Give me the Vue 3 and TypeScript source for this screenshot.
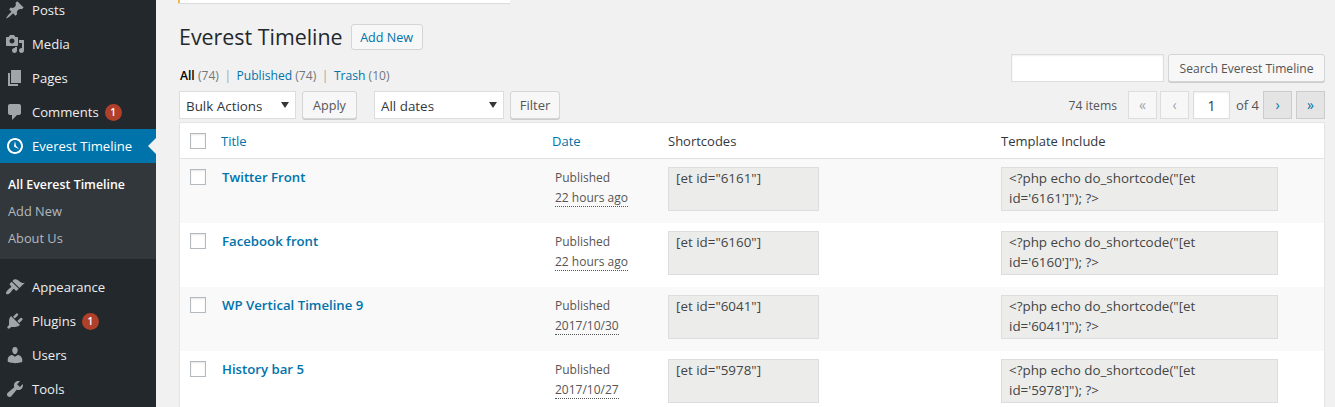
<script setup lang="ts">
interface MenuItem { label: string; d: string; badge?: string }
const icons = {
  post: 'M10.44 3.02l1.82-1.82 6.36 6.35-1.83 1.82c-1.05-.68-2.48-.57-3.41.36l-.75.75c-.92.93-1.04 2.35-.35 3.41l-1.83 1.82-2.41-2.41-2.8 2.79c-.42.42-3.38 2.71-3.8 2.29s1.86-3.39 2.28-3.81l2.79-2.79L4.1 9.36l1.83-1.82c1.05.69 2.48.57 3.4-.36l.75-.75c.93-.92 1.05-2.35.36-3.41z',
  media: 'M13 11V4c0-.55-.45-1-1-1h-1.67L9 1H5L3.67 3H2c-.55 0-1 .45-1 1v7c0 .55.45 1 1 1h10c.55 0 1-.45 1-1zM7 4.5c1.38 0 2.5 1.12 2.5 2.5S8.38 9.5 7 9.5 4.5 8.38 4.5 7 5.62 4.5 7 4.5zM14 6h5v10.5c0 1.38-1.12 2.5-2.5 2.5S14 17.88 14 16.5s1.12-2.5 2.5-2.5c.17 0 .34.02.5.05V9h-3V6zm-4 8.05V13h2v3.5c0 1.38-1.12 2.5-2.5 2.5S7 17.88 7 16.5 8.12 14 9.5 14c.17 0 .34.02.5.05z',
  page: 'M6 15V2h10v13H6zm-1 1h8v2H3V5h2v11z',
  comments: 'M5 2h9c1.1 0 2 .9 2 2v7c0 1.1-.9 2-2 2h-2l-5 5v-5H5c-1.1 0-2-.9-2-2V4c0-1.1.9-2 2-2z',
  clock: 'M10 2c4.42 0 8 3.58 8 8s-3.58 8-8 8-8-3.58-8-8 3.58-8 8-8zm0 14c3.31 0 6-2.69 6-6s-2.69-6-6-6-6 2.69-6 6 2.69 6 6 6zm-.71-5.29c.07.05.14.1.23.15l-.02.02L14 13l-3.03-3.19L10 5l-.97 4.81h.01c0 .02-.01.05-.02.09S9 9.97 9 10c0 .28.1.52.29.71z',
  appearance: 'M14.48 11.06L7.41 3.99l1.5-1.5c.5-.56 2.3-.47 3.51.32 1.21.8 1.43 1.28 2.91 2.1 1.18.64 2.45 1.26 4.45.85zm-.71.71L6.7 4.7 4.93 6.47c-.39.39-.39 1.02 0 1.41l1.06 1.06c.39.39.39 1.03 0 1.42-.6.6-1.43 1.11-2.21 1.69-.35.26-.7.53-1.01.84-1.34 1.34-2.37 3.06-1.37 4.06s2.72 0 4.07-1.36c.31-.31.58-.66.85-1.02.57-.78 1.08-1.61 1.69-2.21.39-.39 1.02-.39 1.41 0l1.06 1.06c.39.39 1.02.39 1.41 0z',
  plugins: 'M13.11 4.36L9.87 7.6 8 5.73l3.24-3.24c.35-.34 1.05-.2 1.56.32.52.51.66 1.21.31 1.55zm-8 1.77l.91-1.12 9.01 9.01-1.19.84c-.71.71-2.63 1.16-3.82 1.16H6.14L4.9 17.26c-.59.59-1.54.59-2.12 0-.59-.58-.59-1.53 0-2.12l1.24-1.24v-3.88c0-1.13.4-3.19 1.09-3.89zm7.26 3.97l3.24-3.24c.34-.35 1.04-.21 1.55.31.52.51.66 1.21.31 1.55l-3.24 3.25z',
  users: 'M10 9.25c-2.27 0-2.73-3.44-2.73-3.44C7 4.02 7.82 2 9.97 2c2.16 0 2.98 2.02 2.71 3.81 0 0-.41 3.44-2.68 3.44zm0 2.57L12.72 10c2.39 0 4.52 2.33 4.52 4.53v2.49s-3.65 1.13-7.24 1.13c-3.65 0-7.24-1.13-7.24-1.13v-2.49c0-2.25 1.94-4.48 4.47-4.48z',
  tools: 'M16.68 9.77c-1.34 1.34-3.3 1.67-4.95.99l-5.41 6.52c-.99.99-2.59.99-3.58 0s-.99-2.59 0-3.57l6.52-5.42c-.68-1.65-.35-3.61.99-4.95 1.28-1.28 3.12-1.62 4.72-1.06l-2.89 2.89 2.82 2.82 2.86-2.87c.53 1.58.18 3.39-1.08 4.67z',
}
const topItems: MenuItem[] = [
  { label: 'Posts', d: icons.post },
  { label: 'Media', d: icons.media },
  { label: 'Pages', d: icons.page },
  { label: 'Comments', d: icons.comments, badge: '1' },
]
const bottomItems: MenuItem[] = [
  { label: 'Appearance', d: icons.appearance },
  { label: 'Plugins', d: icons.plugins, badge: '1' },
  { label: 'Users', d: icons.users },
  { label: 'Tools', d: icons.tools },
]
const rows = [
  { title: 'Twitter Front', date: '22 hours ago', id: '6161' },
  { title: 'Facebook front', date: '22 hours ago', id: '6160' },
  { title: 'WP Vertical Timeline 9', date: '2017/10/30', id: '6041' },
  { title: 'History bar 5', date: '2017/10/27', id: '5978' },
]
</script>

<template>
  <div class="page">
    <aside class="sidebar">
      <ul class="menu first">
        <li v-for="m in topItems" :key="m.label" class="item">
          <svg class="ico" viewBox="0 0 20 20"><path :d="m.d" /></svg>
          <span>{{ m.label }}</span>
          <b v-if="m.badge" class="badge">{{ m.badge }}</b>
        </li>
      </ul>
      <div class="item active">
        <svg class="ico" viewBox="0 0 20 20"><path :d="icons.clock" /></svg>
        <span>Everest Timeline</span>
      </div>
      <ul class="sub">
        <li class="current">All Everest Timeline</li>
        <li>Add New</li>
        <li>About Us</li>
      </ul>
      <ul class="menu second">
        <li v-for="m in bottomItems" :key="m.label" class="item">
          <svg class="ico" viewBox="0 0 20 20"><path :d="m.d" /></svg>
          <span>{{ m.label }}</span>
          <b v-if="m.badge" class="badge">{{ m.badge }}</b>
        </li>
      </ul>
    </aside>

    <main class="main">
      <div class="notice"></div>
      <div class="head">
        <h1>Everest Timeline</h1>
        <a class="btn add">Add New</a>
      </div>
      <div class="views-row">
        <ul class="views">
          <li><strong>All</strong> <em>(74)</em></li>
          <li class="sep">|</li>
          <li><a>Published</a> <em>(74)</em></li>
          <li class="sep">|</li>
          <li><a>Trash</a> <em>(10)</em></li>
        </ul>
        <div class="search">
          <input class="field search-input" type="text" />
          <button class="btn search-btn">Search Everest Timeline</button>
        </div>
      </div>
      <div class="nav">
        <div class="select bulk">Bulk Actions<i></i></div>
        <button class="btn apply">Apply</button>
        <div class="select dates">All dates<i></i></div>
        <button class="btn filter">Filter</button>
        <div class="pager">
          <span class="count">74 items</span>
          <span class="pg off first-pg">«</span>
          <span class="pg off">‹</span>
          <span class="field num">1</span>
          <span class="of">of 4</span>
          <span class="pg on">›</span>
          <span class="pg on">»</span>
        </div>
      </div>
      <table class="tbl">
        <colgroup>
          <col class="c1" /><col class="c2" /><col class="c3" /><col class="c4" /><col />
        </colgroup>
        <thead>
          <tr>
            <th class="cb"><span class="check"></span></th>
            <th class="link title-head">Title</th>
            <th class="link date-head">Date</th>
            <th>Shortcodes</th>
            <th>Template Include</th>
          </tr>
        </thead>
        <tbody>
          <tr v-for="r in rows" :key="r.id">
            <td class="cb"><span class="check"></span></td>
            <td><a class="row-title">{{ r.title }}</a></td>
            <td class="date">Published<br /><abbr>{{ r.date }}</abbr></td>
            <td><div class="code short">[et id="{{ r.id }}"]</div></td>
            <td><div class="code tmpl">&lt;?php echo do_shortcode("[et id='{{ r.id }}']"); ?&gt;</div></td>
          </tr>
        </tbody>
      </table>
    </main>
  </div>
</template>

<style>
html, body { margin: 0; overflow: hidden; }
</style>

<style scoped>
.page {
  display: flex;
  width: 1335px;
  height: 407px;
  overflow: hidden;
  background: #f1f1f1;
  font-family: "Open Sans", sans-serif;
  font-size: 13px;
  color: #444;
}
ul { list-style: none; margin: 0; padding: 0; }
.sidebar { width: 156px; flex: none; background: #23282d; color: #eee; font-size: 13.1px; }
.menu.first { margin-top: -7px; }
.menu.second { margin-top: 11px; }
.item { height: 34px; display: flex; align-items: center; position: relative; }
.ico { width: 20px; height: 20px; margin: 0 7px 0 5px; fill: #a0a5aa; flex: none; }
.badge {
  width: 17px; height: 17px; border-radius: 50%;
  background: #b0402a; color: #fff; font-size: 10px; font-weight: 600;
  display: flex; align-items: center; justify-content: center;
  margin-left: 6px;
}
.active { background: #0073aa; color: #fff; }
.active .ico { fill: #fff; }
.active::after {
  content: ""; position: absolute; right: 0; top: 50%;
  margin-top: -8px;
  border: 8px solid transparent; border-right-color: #f1f1f1; border-left-width: 0;
}
.sub { background: #32373c; height: 96px; padding-top: 8px; box-sizing: border-box; font-size: 12.8px; color: #b4b9be; }
.sub li { height: 27px; line-height: 27px; padding-left: 8px; }
.sub .current { color: #fff; font-weight: 600; font-size: 12.4px; }

.main { flex: 1; min-width: 0; padding-right: 10px; position: relative; box-sizing: border-box; }
.notice {
  margin-left: 22px; width: 332px; height: 3px; box-sizing: border-box;
  background: #fff; border-left: 2px solid #f0b849; box-shadow: 0 1px 1px rgba(0,0,0,.1);
}
.head { display: flex; align-items: center; margin: 21px 0 0 23px; height: 26px; }
h1 { margin: 0; font-size: 21.4px; font-weight: 400; color: #23282d; line-height: 26px; }
.btn {
  display: inline-flex; align-items: center; justify-content: center;
  box-sizing: border-box; height: 28px; border: 1px solid #d3d6d6; border-radius: 3px;
  background: #f7f7f7; color: #555; font: 13px "Open Sans", sans-serif; padding: 0;
  box-shadow: 0 1px 0 #ccc;
}
.add { margin-left: 8px; width: 72px; height: 26px; color: #0073aa; box-shadow: none; font-size: 12.6px; }
.views-row { display: flex; justify-content: space-between; height: 37px; margin: 4px 0 0 24px; }
.views { display: flex; align-items: center; height: 20px; margin-top: 11px; gap: 5.5px; font-size: 12.1px; }
.views em { font-style: normal; color: #72777c; }
.views strong { font-weight: 600; color: #000; }
.views a { color: #0073aa; }
.views .sep { color: #a0a5aa; }
.search { display: flex; gap: 4px; height: 28px; }
.field { box-sizing: border-box; border: 1px solid #ddd; background: #fff; box-shadow: inset 0 1px 2px rgba(0,0,0,.07); padding: 0; margin: 0; }
.search-input { width: 153px; height: 28px; }
.search-btn { width: 157px; font-size: 12.1px; }
.nav { display: flex; align-items: center; height: 28px; margin: 0 0 3px 23px; }
.select {
  box-sizing: border-box; height: 28px; background: #fff; border: 1px solid #ddd;
  color: #32373c; line-height: 28px; padding-left: 6px; position: relative; font-size: 13.4px;
}
.select i {
  position: absolute; right: 6px; top: 10px;
  border: 4px solid transparent; border-top: 6px solid #32373c; border-bottom: 0;
}
.bulk { width: 117px; }
.apply { width: 55px; margin-left: 6px; font-size: 12.6px; }
.dates { width: 130px; margin-left: 17px; }
.filter { width: 50px; margin-left: 6px; }
.pager { margin-left: auto; display: flex; align-items: center; color: #555; font-size: 12.2px; }
.count { margin-right: 11px; }
.pg {
  box-sizing: border-box; width: 29px; height: 28px; display: flex; align-items: center; justify-content: center;
  border: 1px solid #ddd; font-size: 14px; line-height: 1;
}
.pg.off { background: #f7f7f7; color: #a0a5aa; margin-right: 3px; }
.pg.on { background: #e4e4e4; color: #0073aa; border-color: #ccc; margin-left: 4px; }
.num { width: 37px; height: 28px; margin: 0 0 0 1px; display: flex; align-items: center; justify-content: center; font-size: 14px; color: #32373c; }
.of { margin: 0 0 0 6px; font-size: 13px; }

.tbl {
  width: 1146px; margin-left: 23px; border-collapse: separate; border-spacing: 0;
  table-layout: fixed; background: #fff; border: 1px solid #e5e5e5; box-sizing: border-box;
}
.c1 { width: 32px; } .c2 { width: 331px; } .c3 { width: 115px; } .c4 { width: 333px; }
th {
  height: 36px; padding: 0 0 0 10px; text-align: left; font-weight: 400; font-size: 13px;
  color: #32373c; border-bottom: 1px solid #e1e1e1; box-sizing: border-box;
}
th.link { color: #0073aa; }
th.title-head { padding-left: 9px; }
th.date-head { padding-left: 9px; }
th.cb, td.cb { padding: 0 0 0 10px; }
.check { display: block; width: 16px; height: 16px; box-sizing: border-box; border: 1px solid #b4b9be; background: #fff; box-shadow: inset 0 1px 2px rgba(0,0,0,.1); }
td { height: 64px; box-sizing: border-box; vertical-align: top; padding: 8px 0 0 10px; }
td.cb { padding-top: 10px; }
tbody tr:nth-child(odd) { background: #f9f9f9; }
.row-title { display: block; color: #0073aa; font-weight: 600; font-size: 13.2px; line-height: 20px; }
.date { color: #555; font-size: 12px; line-height: 20px; padding-left: 12px; padding-top: 9px; white-space: nowrap; }
abbr { border-bottom: 1px dotted #555; text-decoration: none; }
.code { box-sizing: border-box; height: 44px; background: #ecedeb; border: 1px solid #ddd; padding: 0 7px; line-height: 20px; font-size: 13.4px; color: #444; }
.short { width: 151px; }
.tmpl { width: 277px; padding-right: 30px; }
</style>
